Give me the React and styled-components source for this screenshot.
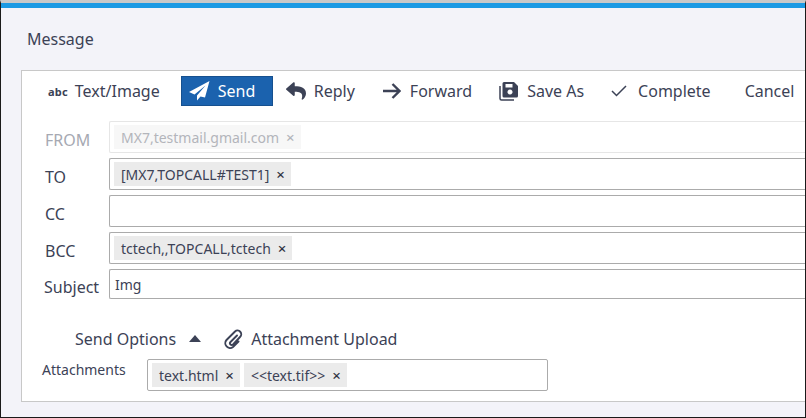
import React from 'react';
import styled, {createGlobalStyle} from 'styled-components';
import {FaReply} from 'react-icons/fa';

const GlobalStyle = createGlobalStyle`
    html, body { margin:0; padding:0; background:#f3f3f9; overflow:hidden; }
    body { font-family:"Noto Sans", "Open Sans", sans-serif; color:#3a3f4e; }
`;

const Frame = styled.div`
    width:806px;
    height:418px;
    box-sizing:border-box;
    border-left:1px solid #1a1a1a;
    border-right:1px solid #1a1a1a;
    border-bottom:1px solid #1a1a1a;
    border-top:3px solid #c9c9c9;
    background:#f3f3f9;
    overflow:hidden;
`;

const TopBar = styled.div`
    height:5px;
    background:#1b9ae4;
`;

const Title = styled.div`
    font-size:16px;
    line-height:22px;
    padding:20px 0 0 26px;
    height:42px;
    color:#3c4256;
`;

const Panel = styled.div`
    margin-left:20px;
    height:332px;
    box-sizing:border-box;
    background:#fff;
    border:1px solid #c8c8c8;
    border-right:none;
    padding:5px 0 0 0;
`;

const Toolbar = styled.div`
    display:flex;
    align-items:center;
    height:30px;
    padding-left:26px;
    font-size:16px;
`;

const ToolButton = styled.div`
    display:flex;
    align-items:center;
    gap:${p => p.$gap || 8}px;
    margin-left:${p => p.$left || 0}px;
    height:30px;
    box-sizing:border-box;
    white-space:nowrap;
    color:#3c4256;
`;

const SendButton = styled(ToolButton)`
    width:92px;
    background:#1b62ae;
    border:1px solid #16508f;
    color:#fff;
    padding-left:7px;
`;

const Abc = styled.span`
    font-size:11px;
    font-weight:700;
    letter-spacing:0.2px;
    color:#3c4256;
`;

const FormRows = styled.div`
    display:flex;
    flex-direction:column;
    gap:5px;
    margin-top:15px;
`;

const Row = styled.div`
    display:flex;
    align-items:center;
    height:${p => p.$h || 32}px;
`;

const Label = styled.div`
    width:87px;
    padding-left:${p => p.$pad || 23}px;
    padding-top:5px;
    box-sizing:border-box;
    font-size:16px;
    color:${p => p.$muted ? '#a6a9b2' : '#3c4256'};
    flex:none;
`;

const Field = styled.div`
    flex:1;
    height:100%;
    box-sizing:border-box;
    border:1px solid ${p => p.$muted ? '#e6e6e6' : '#ababab'};
    border-right:none;
    border-radius:2px 0 0 2px;
    display:flex;
    align-items:center;
    gap:4px;
    padding-left:${p => p.$pad || 4}px;
    font-size:14px;
    color:#3c4256;
`;

const Chip = styled.div`
    display:flex;
    align-items:center;
    height:24px;
    padding:0 6px 0 7px;
    gap:7px;
    font-size:14px;
    background:${p => p.$muted ? '#f7f7f7' : '#ebebeb'};
    color:${p => p.$muted ? '#b3b5bb' : '#3c4256'};
    white-space:nowrap;
`;

const Close = styled.span`
    font-size:15px;
    font-weight:500;
    line-height:1;
    color:${p => p.$muted ? '#b3b5bb' : '#2f3442'};
`;

const OptionsRow = styled.div`
    display:flex;
    align-items:center;
    height:24px;
    margin-top:28px;
    padding-left:53px;
    font-size:16px;
    color:#3c4256;
`;

const Caret = styled.span`
    width:0;
    height:0;
    margin:0 0 2px 13px;
    border-left:6px solid transparent;
    border-right:6px solid transparent;
    border-bottom:7px solid #3c4256;
`;

const UploadLink = styled.div`
    display:flex;
    align-items:center;
    gap:8px;
    margin-left:22px;
`;

const AttachRow = styled.div`
    display:flex;
    margin-top:8px;
    padding-left:20px;
`;

const AttachLabel = styled.div`
    width:105px;
    font-size:14px;
    line-height:20px;
    padding-top:0;
    margin-top:1px;
    color:#3c4256;
`;

const AttachField = styled.div`
    width:401px;
    height:32px;
    box-sizing:border-box;
    border:1px solid #ababab;
    border-radius:2px;
    display:flex;
    align-items:center;
    gap:4px;
    padding-left:4px;
`;

const FloppyIcon = () => (
    <svg width="20" height="20" viewBox="0 0 20 20" fill="#3c4256">
        <path d="M5 1h10l4 4v10a1.500 1.500 0 0 1-1.500 1.500h-12.500a1.500 1.500 0 0 1-1.500-1.500v-12.500a1.500 1.500 0 0 1 1.500-1.500z M6.500 3v3.500h7v-3.500z M11 8.500a2.500 2.500 0 1 0 .01 0z" fillRule="evenodd"/>
        <path d="M1 5v12.500a1.500 1.500 0 0 0 1.500 1.500h12.500" fill="none" stroke="#3c4256" strokeWidth="1.500"/>
    </svg>
);

const PlaneIcon = () => (
    <svg width="21" height="20" viewBox="0 0 21 20" fill="#fff">
        <path d="M20.500 0 L0 11 L5.500 13.500 L16.500 4.500 L8 14.500 L8 19.500 L11.500 15.500 L16 16.500 Z"/>
    </svg>
);

const ArrowIcon = () => (
    <svg width="18" height="16" viewBox="0 0 18 16" fill="none" stroke="#3c4256" strokeWidth="2.400">
        <path d="M0 8 H16 M9.500 1 L16.500 8 L9.500 15"/>
    </svg>
);

const CheckIcon = () => (
    <svg width="16" height="12" viewBox="0 0 16 12" fill="none" stroke="#3c4256" strokeWidth="1.500">
        <path d="M1 6 L5.500 10.500 L15 1"/>
    </svg>
);

const ClipIcon = () => (
    <svg width="20" height="20" viewBox="0 0 20 20" fill="none" stroke="#3c4256" strokeWidth="1.900" strokeLinecap="round">
        <path d="M14 6.500 L7.500 13 a1.700 1.700 0 0 0 2.500 2.500 L17 8 a3.600 3.600 0 0 0 -5 -5.500 L3.500 11 a4.800 4.800 0 0 0 6.500 7 L15.500 12.500"/>
    </svg>
);

const tags = (items, muted) => items.map(t => (
    <Chip key={t} $muted={muted}>{t}<Close $muted={muted}>×</Close></Chip>
));

const App = () => (
    <Frame>
        <GlobalStyle />
        <TopBar />
        <Title>Message</Title>
        <Panel>
            <Toolbar>
                <ToolButton $gap={7}><Abc>abc</Abc>Text/Image</ToolButton>
                <SendButton $left={21}><PlaneIcon />Send</SendButton>
                <ToolButton $left={13} $gap={8}><FaReply size={20} />Reply</ToolButton>
                <ToolButton $left={28} $gap={9}><ArrowIcon />Forward</ToolButton>
                <ToolButton $left={27} $gap={8}><FloppyIcon />Save As</ToolButton>
                <ToolButton $left={27} $gap={11}><CheckIcon />Complete</ToolButton>
                <ToolButton $left={34}>Cancel</ToolButton>
            </Toolbar>
            <FormRows>
                <Row $h={32}><Label $muted>FROM</Label><Field $muted>{tags(['MX7,testmail.gmail.com'], true)}</Field></Row>
                <Row><Label>TO</Label><Field>{tags(['[MX7,TOPCALL#TEST1]'])}</Field></Row>
                <Row><Label>CC</Label><Field /></Row>
                <Row><Label>BCC</Label><Field>{tags(['tctech,,TOPCALL,tctech'])}</Field></Row>
                <Row $h={30}><Label $pad={22}>Subject</Label><Field $pad={5}>Img</Field></Row>
            </FormRows>
            <OptionsRow>
                Send Options<Caret />
                <UploadLink><ClipIcon />Attachment Upload</UploadLink>
            </OptionsRow>
            <AttachRow>
                <AttachLabel>Attachments</AttachLabel>
                <AttachField>{tags(['text.html', '<<text.tif>>'])}</AttachField>
            </AttachRow>
        </Panel>
    </Frame>
);

export default App;
